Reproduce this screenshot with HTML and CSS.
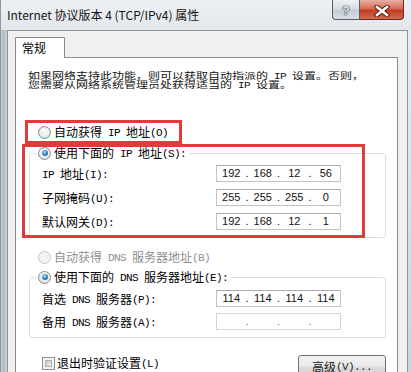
FILE: index.html
```html
<!DOCTYPE html>
<html lang="zh-CN">
<head>
<meta charset="utf-8">
<title>Internet 协议版本 4 (TCP/IPv4) 属性</title>
<link rel="stylesheet" href="styles.css">
</head>
<body>
<div class="window">
  <div class="titlebar">
    <span class="title">Internet 协议版本 4 (TCP/IPv4) 属性</span>
    <div class="caption">
      <div class="cbtn help"><span class="q">?</span></div>
      <div class="cbtn close">
        <svg width="16" height="12" viewBox="0 0 16 12">
          <path d="M3 2 L13 10 M13 2 L3 10" stroke="#5a1a10" stroke-width="4.6" stroke-linecap="square" fill="none"/>
          <path d="M3 2 L13 10 M13 2 L3 10" stroke="#ffffff" stroke-width="2.6" stroke-linecap="square" fill="none"/>
        </svg>
      </div>
    </div>
  </div>
  <div class="client">
    <div class="tabs"><div class="tab">常规</div></div>
    <div class="panel">
      <p class="desc">如果网络支持此功能，则可以获取自动指派的<span class="m"> IP </span>设置。否则，<br>您需要从网络系统管理员处获得适当的<span class="m"> IP </span>设置。</p>

      <div class="radio-row first"><span class="radio"></span><span>自动获得<span class="m"> IP </span>地址<span class="m">(O)</span></span></div>

      <div class="group g-ip">
        <div class="group-head"><span class="radio checked"></span><span>使用下面的<span class="m"> IP </span>地址<span class="m">(S):</span></span></div>
        <div class="field-row"><span class="label"><span class="m">IP </span>地址<span class="m">(I):</span></span><div class="ipbox"><span class="oct">192</span><span class="dot">.</span><span class="oct">168</span><span class="dot">.</span><span class="oct">12</span><span class="dot">.</span><span class="oct">56</span></div></div>
        <div class="field-row"><span class="label">子网掩码<span class="m">(U):</span></span><div class="ipbox"><span class="oct">255</span><span class="dot">.</span><span class="oct">255</span><span class="dot">.</span><span class="oct">255</span><span class="dot">.</span><span class="oct">0</span></div></div>
        <div class="field-row"><span class="label">默认网关<span class="m">(D):</span></span><div class="ipbox"><span class="oct">192</span><span class="dot">.</span><span class="oct">168</span><span class="dot">.</span><span class="oct">12</span><span class="dot">.</span><span class="oct">1</span></div></div>
      </div>

      <div class="radio-row dns-auto disabled"><span class="radio"></span><span>自动获得<span class="m"> DNS </span>服务器地址<span class="m">(B)</span></span></div>

      <div class="group g-dns">
        <div class="group-head"><span class="radio checked"></span><span>使用下面的<span class="m"> DNS </span>服务器地址<span class="m">(E):</span></span></div>
        <div class="field-row"><span class="label">首选<span class="m"> DNS </span>服务器<span class="m">(P):</span></span><div class="ipbox"><span class="oct">114</span><span class="dot">.</span><span class="oct">114</span><span class="dot">.</span><span class="oct">114</span><span class="dot">.</span><span class="oct">114</span></div></div>
        <div class="field-row"><span class="label">备用<span class="m"> DNS </span>服务器<span class="m">(A):</span></span><div class="ipbox empty"><span class="oct"></span><span class="dot">.</span><span class="oct"></span><span class="dot">.</span><span class="oct"></span><span class="dot">.</span><span class="oct"></span></div></div>
      </div>

      <div class="bottom-row">
        <div class="check-row"><span class="checkbox"></span><span>退出时验证设置<span class="m">(L)</span></span></div>
        <div class="button">高级<span class="m">(V)...</span></div>
      </div>

      <div class="mark mark1"></div>
      <div class="mark mark2"></div>
    </div>
  </div>
</div>
</body>
</html>
```
FILE: styles.css
```css
html, body {
  margin: 0;
  padding: 0;
}
body {
  width: 411px;
  height: 372px;
  overflow: hidden;
  font-family: "Noto Sans CJK SC", "Liberation Sans", sans-serif;
  font-size: 12px;
  color: #000;
}
.m {
  font-family: "Liberation Mono", monospace;
  font-size: 11px;
  letter-spacing: -0.6px;
  line-height: 0;
  vertical-align: 1px;
  white-space: pre;
}
.window {
  width: 411px;
  height: 372px;
  box-sizing: border-box;
  border-left: 1px solid #8e98a3;
  background:
    linear-gradient(90deg, #c4cad1 0, #b3bac3 3px, #cfd5dc 6px, rgba(0,0,0,0) 6px),
    linear-gradient(180deg, #eceff3 0%, #dfe5eb 40%, #cdd4dc 100%);
  display: flex;
  flex-direction: column;
}
.titlebar {
  height: 30px;
  flex: none;
  display: flex;
  align-items: flex-start;
  padding-left: 6px;
  background: linear-gradient(180deg, #eef1f4 0%, #e2e7ec 100%);
}
.title {
  margin-top: 7px;
  line-height: 16px;
  font-size: 12px;
  color: #141414;
}
.caption {
  margin-left: auto;
  margin-right: 7px;
  display: flex;
}
.cbtn {
  height: 20px;
  box-sizing: border-box;
  border: 1px solid #56606d;
  border-top: none;
  display: flex;
  align-items: center;
  justify-content: center;
  padding-top: 2px;
}
.help {
  width: 28px;
  border-radius: 0 0 0 4px;
  background: linear-gradient(180deg, #eef1f5 0%, #d6dce3 48%, #c3cbd4 52%, #d8dee5 100%);
}
.q {
  font-family: "Liberation Sans", sans-serif;
  font-weight: bold;
  font-size: 13px;
  line-height: 13px;
  color: #e6e8eb;
  text-shadow: 0 0 1px #2f3744, 0 0 1px #2f3744, 0 0 1px #2f3744;
}
.close {
  width: 44px;
  border-left: none;
  border-color: #6e2a1e;
  border-radius: 0 0 4px 0;
  background: linear-gradient(180deg, #eab0a4 0%, #d86a55 45%, #c43c22 55%, #d5694f 100%);
}
.client {
  flex: 1;
  margin: 0 3px 0 6px;
  border: 1px solid #8d939b;
  border-bottom: none;
  background: #f0f0f0;
  padding: 6px 9px 0 7px;
  display: flex;
  flex-direction: column;
}
.tabs {
  display: flex;
  height: 21px;
  margin-bottom: -1px;
  position: relative;
  z-index: 1;
}
.tab {
  width: 50px;
  box-sizing: border-box;
  border: 1px solid #898c95;
  border-bottom: none;
  background: #fff;
  padding-left: 6px;
  line-height: 19px;
  font-size: 12px;
}
.panel {
  flex: 1;
  position: relative;
  border: 1px solid #898c95;
  border-bottom: none;
  background: #fff;
  display: flex;
  flex-direction: column;
}
.desc {
  margin: 13px 0 -6px 12px;
  height: 24px;
  font-size: 12px;
  line-height: 12px;
  transform: scaleY(0.75);
  transform-origin: 0 0;
  white-space: nowrap;
  color: #111;
}
.radio-row, .group-head, .check-row {
  display: flex;
  align-items: center;
  height: 16px;
  line-height: 16px;
  white-space: nowrap;
}
.radio-row {
  margin-left: 22px;
}
.radio-row.first {
  margin-top: 35px;
}
.radio-row.dns-auto {
  margin-top: 11px;
}
.disabled {
  color: #8f8f8f;
}
.radio {
  width: 13px;
  height: 13px;
  box-sizing: border-box;
  border-radius: 50%;
  border: 1px solid #8a8a8a;
  background: radial-gradient(circle at 50% 40%, #ffffff 0%, #f0f0f0 45%, #cfcfcf 100%);
  margin-right: 3px;
  position: relative;
  flex: none;
}
.radio.checked::after {
  content: "";
  position: absolute;
  left: 2.5px;
  top: 2.5px;
  width: 6px;
  height: 6px;
  border-radius: 50%;
  background: radial-gradient(circle at 40% 35%, #b6e0fb 0%, #3a8ad0 45%, #0f3f73 100%);
}
.disabled .radio {
  border-color: #c4c4c4;
  background: #f3f3f3;
}
.group {
  margin: 13px 11px 0 13px;
  border: 1px solid #d5dfe5;
  border-radius: 3px;
  padding: 0 0 7px 0;
}
.g-dns {
  margin-top: 12px;
}
.group-head {
  margin: -9px 0 0 7px;
  padding: 0 3px 0 1px;
  background: #fff;
  width: max-content;
}
.field-row {
  display: flex;
  align-items: center;
  padding-left: 12px;
  margin-top: 7px;
  height: 17px;
  line-height: 16px;
  white-space: nowrap;
}
.g-ip .group-head + .field-row {
  margin-top: 4px;
}
.g-dns .field-row {
  margin-top: 6px;
}
.g-dns .group-head + .field-row {
  margin-top: 5px;
}
.label {
  width: 174px;
  flex: none;
}
.ipbox {
  width: 125px;
  height: 17px;
  box-sizing: border-box;
  border: 1px solid #c3c3c3;
  border-top-color: #a9abb0;
  display: flex;
  align-items: center;
  font-family: "Liberation Sans", sans-serif;
  font-size: 11px;
  line-height: 15px;
  color: #111;
}
.oct {
  flex: 1;
  text-align: center;
}
.dot {
  width: 3px;
  text-align: center;
}
.ipbox.empty {
  border-color: #d6d6d6;
  color: #777;
}
.bottom-row {
  display: flex;
  justify-content: space-between;
  align-items: flex-start;
  margin: 17px 11px 0 26px;
}
.checkbox {
  width: 13px;
  height: 13px;
  box-sizing: border-box;
  border: 1px solid #8e8f8f;
  background: #f4f4f4;
  margin-right: 2px;
  position: relative;
  flex: none;
}
.checkbox::after {
  content: "";
  position: absolute;
  left: 2px;
  top: 2px;
  width: 7px;
  height: 7px;
  background: linear-gradient(135deg, #c6c6c6, #eeeeee);
  border: 1px solid #b0b0b0;
  box-sizing: border-box;
}
.button {
  width: 88px;
  height: 23px;
  box-sizing: border-box;
  border: 1px solid #707070;
  border-radius: 3px;
  background: linear-gradient(180deg, #f2f2f2 0%, #ebebeb 48%, #dddddd 52%, #cfcfcf 100%);
  display: flex;
  align-items: center;
  justify-content: center;
  line-height: 16px;
  color: #222;
}
.mark {
  position: absolute;
  box-sizing: border-box;
  border: 3px solid #e23a3b;
  pointer-events: none;
}
.mark1 {
  left: 9px;
  top: 62px;
  width: 157px;
  height: 24px;
}
.mark2 {
  left: 6px;
  top: 86px;
  width: 343px;
  height: 94px;
}
```
